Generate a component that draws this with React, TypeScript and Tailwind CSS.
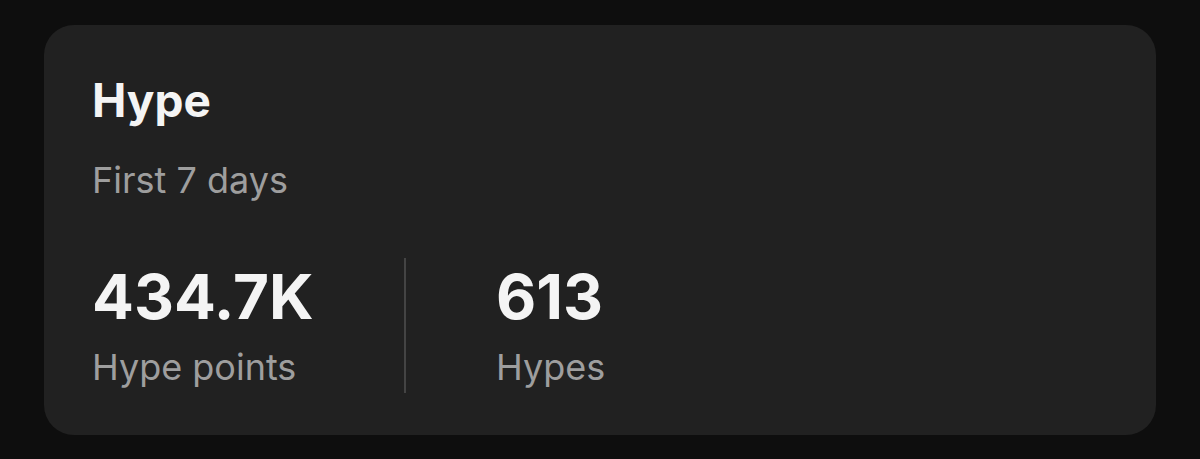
export default function App() {
  return (
    <div className="w-[1200px] h-[459px] bg-[#0e0e0e] pt-[25px] px-[44px] font-['Inter',sans-serif]">
      <div className="h-[410px] rounded-[30px] bg-[#212121] pl-[48px] pt-[52px]">
        <h2 className="text-[46px] leading-[46px] font-bold text-[#f4f4f4]">Hype</h2>
        <p className="mt-[39px] text-[36px] leading-[36px] text-[#9e9e9e]">First 7 days</p>

        <div className="mt-[60px] flex">
          <div className="w-[312px] py-2">
            <div className="text-[62px] leading-[62px] font-bold text-[#f4f4f4]">434.7K</div>
            <div className="mt-[21px] text-[36px] leading-[36px] text-[#9e9e9e]">Hype points</div>
          </div>
          <div className="w-[2px] bg-[#444444]" />
          <div className="pl-[90px] py-2">
            <div className="text-[62px] leading-[62px] font-bold text-[#f4f4f4]">613</div>
            <div className="mt-[21px] text-[36px] leading-[36px] text-[#9e9e9e]">Hypes</div>
          </div>
        </div>
      </div>
    </div>
  )
}
